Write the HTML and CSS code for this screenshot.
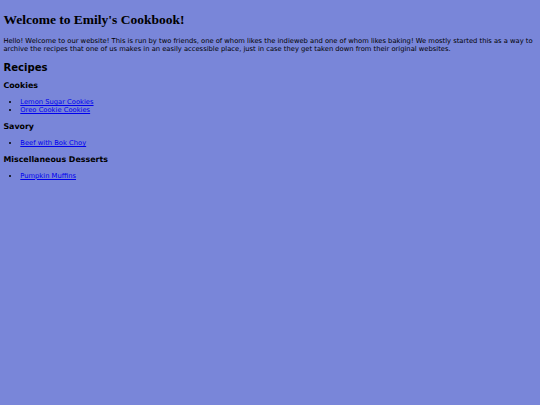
FILE: index.html
```html
<!DOCTYPE html>
<html lang="en">
<head>
<meta charset="utf-8">
<title>Emily's Cookbook</title>
<link rel="stylesheet" href="styles.css">
</head>
<body>
<h1 class="title">Welcome to Emily's Cookbook!</h1>
<p class="intro">Hello! Welcome to our website! This is run by two friends, one of whom likes the indieweb and one of whom likes baking! We mostly started this as a way to archive the recipes that one of us makes in an easily accessible place, just in case they get taken down from their original websites.</p>
<h2 class="section">Recipes</h2>
<h3 class="category">Cookies</h3>
<ul class="recipes">
<li><a href="#">Lemon Sugar Cookies</a></li>
<li><a href="#">Oreo Cookie Cookies</a></li>
</ul>
<h3 class="category">Savory</h3>
<ul class="recipes">
<li><a href="#">Beef with Bok Choy</a></li>
</ul>
<h3 class="category">Miscellaneous Desserts</h3>
<ul class="recipes">
<li><a href="#">Pumpkin Muffins</a></li>
</ul>
</body>
</html>
```

FILE: styles.css
```css
html {
  background: #7986d9;
}
body {
  margin: 3.4px;
  font-family: "DejaVu Sans", Verdana, sans-serif;
  font-size: 6.75px;
  color: #000;
}
.title {
  font-family: "Liberation Serif", "Times New Roman", serif;
  font-size: 13.5px;
  margin: 9.05px 0;
}
.intro {
  margin: 6.75px 0;
}
.section {
  font-size: 10.125px;
  margin: 8.4px 0;
}
.category {
  font-size: 7.9px;
  margin: 7.9px 0;
}
.recipes {
  margin: 6.75px 0;
  padding-left: 16.9px;
}
.recipes a {
  color: #0000ee;
}
```
